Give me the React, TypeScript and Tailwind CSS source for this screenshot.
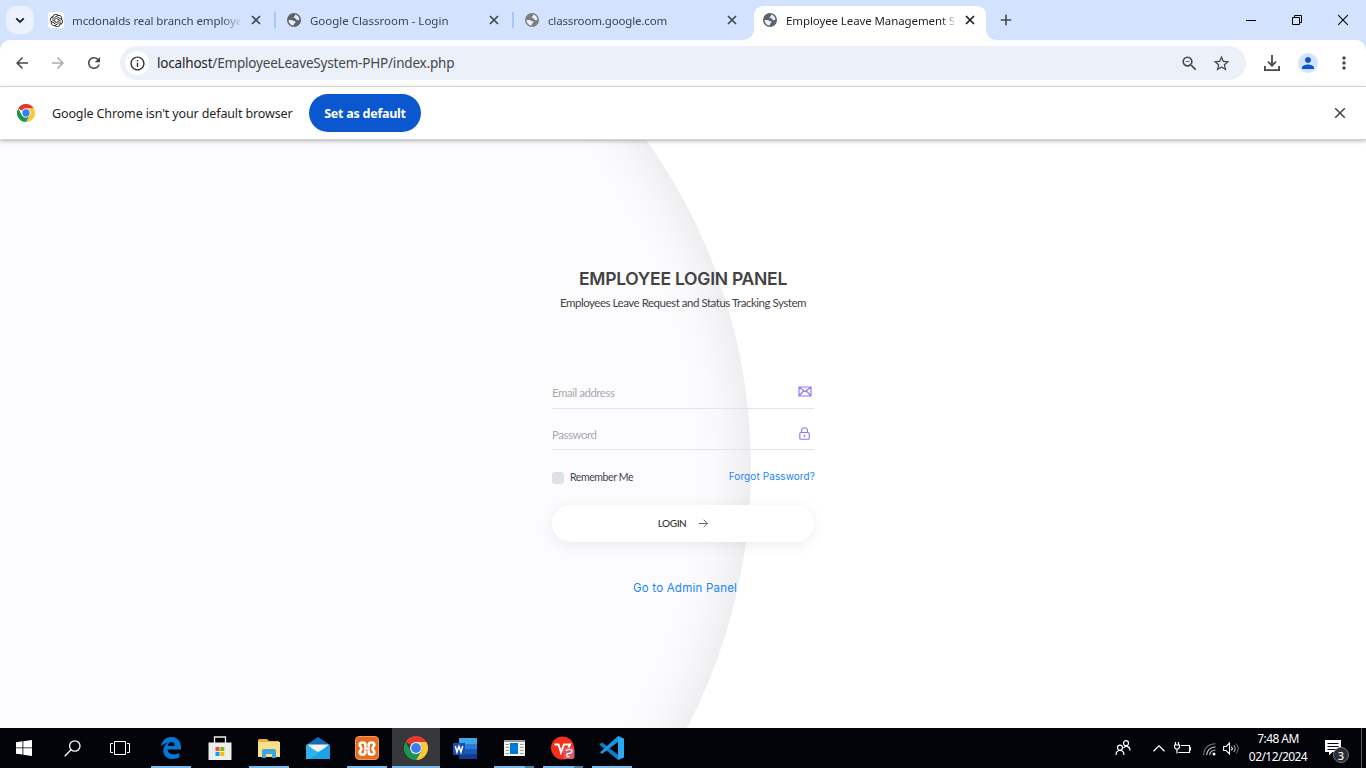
import React from "react";
import type { ReactNode } from "react";
import { SiOpenai } from "react-icons/si";
import {
  MdArrowBack,
  MdArrowForward,
  MdRefresh,
  MdInfoOutline,
  MdZoomOut,
  MdStarBorder,
  MdPerson,
  MdMoreVert,
} from "react-icons/md";

const ui = "font-['Noto_Sans','Open_Sans',sans-serif]";

function Cross({ size, color, width = 1.6 }: { size: number; color: string; width?: number }) {
  return (
    <svg width={size} height={size} viewBox="0 0 10 10" fill="none" stroke={color} strokeWidth={width}>
      <path d="M1 1l8 8M9 1L1 9" />
    </svg>
  );
}

function Globe({ color }: { color: string }) {
  return (
    <svg width="14" height="14" viewBox="0 0 14 14">
      <circle cx="7" cy="7" r="7" fill={color} />
      <path
        fill="#e6eefc"
        d="M8.3 1.6c2.3.5 4 2.6 4.1 5-.7.9-1.700 .9-2.500.5-.8-.5-.3-1.400-1.200-1.700-.8-.3-1.900 0-2.100-.8-.2-.9 1-.9 1.300-1.500.3-.6 0-1 .4-1.500zM1.600 7h3c1.300 0 1.500 1 2.400 1.200.9.200 1.600.1 1.600 1 0 1-1.400.8-1.600 1.600-.1.500 0 1-.3 1.600C3.800 12.200 1.500 10 1.600 7z"
      />
    </svg>
  );
}

function Chrome({ size }: { size: number }) {
  return (
    <svg width={size} height={size} viewBox="0 0 48 48">
      <path fill="#e33b2e" d="M3.200 12A24 24 0 0 1 44.800 12H24A12 12 0 0 0 13.600 18z" />
      <path fill="#fcc934" d="M44.800 12A24 24 0 0 1 24 48L34.400 30A12 12 0 0 0 34.400 18L24 12z" />
      <path fill="#1a9850" d="M24 48A24 24 0 0 1 3.200 12L13.600 30A12 12 0 0 0 24 36L34.400 30z" />
      <circle cx="24" cy="24" r="12" fill="#fff" />
      <circle cx="24" cy="24" r="9.800" fill="#3b7ded" />
    </svg>
  );
}

function Tab({ icon, title, active, line, spacing = "" }: { icon: ReactNode; title: string; active?: boolean; line?: boolean; spacing?: string }) {
  return (
    <div className="relative flex h-10 w-[238px] shrink-0 items-center">
      {active && (
        <svg className="absolute -left-2.5 top-1.5" width="256" height="34" viewBox="0 0 256 34">
          <path fill="#fff" d="M0 34Q11 33 11 22V10Q11 0 21 0H233Q243 0 243 10V22Q243 34 255 34z" />
        </svg>
      )}
      <div className="relative flex w-[33px] shrink-0 items-center pl-2.5">{icon}</div>
      <div
        className={`relative mt-px w-[168px] whitespace-nowrap text-[11.5px] leading-5 ${spacing} ${
          active ? "text-[#1f1f1f] [mask-image:linear-gradient(to_right,#000_155px,transparent_172px)]" : "text-[#3c4250] [mask-image:linear-gradient(to_right,#000_150px,transparent_170px)]"
        }`}
      >
        {title}
      </div>
      <div className="relative flex w-8 justify-center">
        <Cross size={10} color={active ? "#1f1f1f" : "#41464f"} width={1.7} />
      </div>
      {line && <div className="ml-0.5 h-4 w-0.5 shrink-0 bg-[#a8c7fa]" />}
    </div>
  );
}

function TabStrip() {
  return (
    <div className="flex h-10 shrink-0 items-center bg-[#d3e3fd]">
      <div className="ml-1.5 mr-[5px] flex size-7 items-center justify-center rounded-[10px] bg-[#ebf1fd]">
        <svg width="10" height="7" viewBox="0 0 10 7" fill="none" stroke="#1f1f1f" strokeWidth="1.800">
          <path d="M1.200 1.300L5 5l3.800-3.700" />
        </svg>
      </div>
      <Tab
        title="mcdonalds real branch employe"
        spacing="tracking-[-0.1px]"
        line
        icon={
          <span className="-ml-px flex size-4 items-center justify-center rounded-[3px] bg-white">
            <SiOpenai size={13} color="#222" />
          </span>
        }
      />
      <Tab title="Google Classroom - Login" line icon={<Globe color="#5f6368" />} />
      <Tab title="classroom.google.com" spacing="tracking-[-0.15px]" icon={<Globe color="#7d7d7f" />} />
      <Tab title="Employee Leave Management S" spacing="tracking-[-0.1px]" active icon={<Globe color="#5f6368" />} />
      <svg className="ml-[9px]" width="12" height="12" viewBox="0 0 12 12" stroke="#474747" strokeWidth="1.600">
        <path d="M6 .8v10.400M.8 6h10.400" />
      </svg>
      <div className="ml-auto flex items-center">
        <div className="flex w-[46px] justify-center"><div className="h-px w-2.5 bg-black" /></div>
        <div className="flex w-[46px] justify-center">
          <svg width="10" height="10" viewBox="0 0 10 10" fill="none" stroke="#000">
            <path d="M.5 2.500h7v7h-7zM2.500 2.500v-2h7v7h-2" />
          </svg>
        </div>
        <div className="flex w-[46px] justify-center"><Cross size={12} color="#000" width={0.9} /></div>
      </div>
    </div>
  );
}

function Toolbar() {
  return (
    <div className="bg-[#d3e3fd]">
      <div className="flex h-[47px] items-center rounded-t-[10px] border-b border-[#dfe1e2] bg-white text-[#474747]">
        <MdArrowBack size={18} className="ml-[13px]" />
        <MdArrowForward size={18} className="ml-[18px] text-[#acacac]" />
        <MdRefresh size={18} className="ml-[18px]" />
        <div className="ml-[17px] flex h-[34px] w-[1126px] items-center rounded-full bg-[#ecf0f9]">
          <div className="ml-[5px] flex size-6 items-center justify-center rounded-full bg-white">
            <MdInfoOutline size={17} color="#333" />
          </div>
          <div className="ml-2 whitespace-nowrap text-[13.5px] leading-5 tracking-[-0.19px] text-[#474747]">
            <span className="text-[#1f1f1f]">localhost</span>/EmployeeLeaveSystem-PHP/index.php
          </div>
          <MdZoomOut size={19} className="ml-auto" />
          <MdStarBorder size={19} className="ml-[13px] mr-[15px]" />
        </div>
        <svg className="ml-[18px]" width="16" height="16" viewBox="0 0 16 16" fill="none" stroke="#474747" strokeWidth="1.800">
          <path d="M8 0v10.500M4 6.700l4 4 4-4M.9 11v4.100h14.200V11" />
        </svg>
        <div className="ml-[18px] flex size-5 items-center justify-center rounded-full bg-[#d3e3fd]">
          <MdPerson size={18} color="#0b57d0" />
        </div>
        <MdMoreVert size={20} className="ml-4" />
      </div>
    </div>
  );
}

function InfoBar() {
  return (
    <div className="relative z-10 flex h-[53px] shrink-0 items-center border-b border-[#d4d5d7] bg-white shadow-[0_1px_4px_rgba(0,0,0,0.3)]">
      <div className="ml-[17px]"><Chrome size={18} /></div>
      <div className="ml-[17px] mt-0.5 w-[257px] whitespace-nowrap text-[12.5px] tracking-[-0.13px] text-[#1f1f1f]">
        Google Chrome isn't your default browser
      </div>
      <button className="flex h-[38px] w-28 items-center justify-center whitespace-nowrap rounded-full bg-[#0b57d0] pt-0.5 text-[12.5px] font-bold tracking-[-0.25px] text-white">
        Set as default
      </button>
      <div className="ml-auto mr-5"><Cross size={12} color="#474747" width={1.300} /></div>
    </div>
  );
}

function Field({ label, icon, className }: { label: string; icon: ReactNode; className: string }) {
  return (
    <div className={`flex w-[262px] items-center justify-between border-b border-[#e4e4e6] text-[11.5px] tracking-[-0.48px] text-[#aaa] ${className}`}>
      <span className="pt-0.5">{label}</span>
      {icon}
    </div>
  );
}

function LoginPage() {
  return (
    <main className="relative flex flex-1 flex-col items-center overflow-hidden bg-white font-['Lato',sans-serif]">
      <div className="absolute -left-[375px] -top-[236px] size-[1126px] rounded-full bg-[#fcfcff] shadow-[inset_0_0_60px_rgba(0,0,0,0.11)]" />
      <h1 className="relative mt-[125px] whitespace-nowrap font-['Inter',sans-serif] text-[17.5px] font-semibold leading-7 tracking-[-0.25px] text-[#424242]">
        EMPLOYEE LOGIN PANEL
      </h1>
      <p className="relative whitespace-nowrap text-[11.5px] leading-5 tracking-[-0.47px] text-[#444]">
        Employees Leave Request and Status Tracking System
      </p>
      <form className="relative mt-[63px] w-[262px]">
        <Field
          className="h-[33px]"
          label="Email address"
          icon={
            <svg className="mb-px mr-0.5" width="14" height="11" viewBox="0 0 14 11" fill="none" stroke="#9277ff" strokeWidth="1.200">
              <path d="M1 1h12v9H1zM1 1l6 4.800L13 1M1 10l4.500-5M13 10L8.500 5" />
            </svg>
          }
        />
        <Field
          className="h-[41px] pt-2.5"
          label="Password"
          icon={
            <svg className="mb-0.5 mr-1" width="11" height="13" viewBox="0 0 11 13" fill="none" stroke="#9277ff" strokeWidth="1.100">
              <rect x=".8" y="5.500" width="9.400" height="6.800" rx="1" />
              <path d="M2.500 5.500V3.700a3 3 0 0 1 6 0v1.800M5.500 8v2M4.700 8.200h1.600" />
            </svg>
          }
        />
        <div className="mt-[17px] flex h-5 items-center">
          <span className="mt-px size-3 rounded-[3px] bg-[#dee2e6]" />
          <span className="ml-1.5 mt-0.5 text-[10.5px] tracking-[-0.4px] text-[#444]">Remember Me</span>
          <a className="-mr-px mb-px ml-auto whitespace-nowrap font-['Inter',sans-serif] text-[10px] tracking-[0.1px] text-[#1a82ff]">Forgot Password?</a>
        </div>
        <button className="mt-[18px] flex h-[37px] w-full items-center justify-center rounded-full bg-white text-[10px] font-medium tracking-[-0.4px] text-[#333] shadow-[0_3px_16px_rgba(0,0,0,0.07)]">
          LOGIN
          <svg className="ml-[13px]" width="9" height="9" viewBox="0 0 9 9" fill="none" stroke="#555" strokeWidth=".9">
            <path d="M0 4.500h8.300M4.700 .8l3.700 3.700-3.700 3.700" />
          </svg>
        </button>
      </form>
      <a className="relative ml-1 mt-[37px] whitespace-nowrap font-['Inter',sans-serif] text-[11.5px] leading-[18px] tracking-[0.22px] text-[#1a82ff]">Go to Admin Panel</a>
    </main>
  );
}

function TaskItem({ children, open, active, split }: { children: ReactNode; open?: boolean; active?: boolean; split?: boolean }) {
  return (
    <div className={`flex h-10 w-12 shrink-0 flex-col items-center ${active ? "bg-[#37383b]" : ""}`}>
      <div className="flex h-[38px] items-center pt-0.5">{children}</div>
      {open && (
        <div className={`flex h-0.5 bg-[#76b9ed] ${active ? "w-12" : "w-10"}`}>
          {split && <div className="ml-auto h-0.5 w-[9px] bg-[#4f7ea4]" />}
        </div>
      )}
    </div>
  );
}

function Taskbar() {
  return (
    <footer className="flex h-10 shrink-0 bg-[#010308] text-white">
      <TaskItem>
        <svg width="16" height="16" viewBox="0 0 16 16" fill="#fff">
          <path d="M0 2.200L6.500 1.300V7.500H0zM7.300 1.200L16 0v7.500H7.300zM0 8.300h6.500v6.300L0 13.700zM7.300 8.300H16V16l-8.700-1.300z" />
        </svg>
      </TaskItem>
      <TaskItem>
        <svg width="17" height="17" viewBox="0 0 17 17" fill="none" stroke="#fff" strokeWidth="1.300">
          <circle cx="10.800" cy="6" r="5.200" />
          <path d="M7 9.800L.7 16.300" />
        </svg>
      </TaskItem>
      <TaskItem>
        <svg width="20" height="14" viewBox="0 0 20 14" fill="none" stroke="#fff">
          <path d="M4.500 .5h11v13h-11zM3 2.500H.5v9H3M17 2.500h2.500v9H17" />
        </svg>
      </TaskItem>
      <div className="flex gap-px pl-[3px]">
        <TaskItem open>
          <svg width="20" height="22" viewBox="0 0 20 22" fill="#0078d7">
            <path d="M0 9.600C.8 3.500 4.800 0 10.200 0 16.500 0 20 4.700 20 10v2.500H6.600c.2 3.500 3 4.900 6 4.900 2.200 0 4-.6 5.800-1.600v4.500C16.600 21.400 14.300 22 11.700 22 6.300 22 2.300 18.800 2.300 13.400c0-3.400 1.900-6.200 4.700-7.700C4 6 1.700 7.300 0 9.600zM6.700 9h7c0-2.500-1-4-3.200-4C8.300 5 7.100 6.800 6.700 9z" />
          </svg>
        </TaskItem>
        <TaskItem>
          <svg width="24" height="24" viewBox="0 0 24 24">
            <path fill="none" stroke="#eee" strokeWidth="1.300" d="M6.500 8V1h11v7" />
            <path fill="#eee" d="M.5 6.500h23V24H.5z" />
            <path fill="#f25022" d="M7.500 11h4v4h-4z" /><path fill="#7fba00" d="M12.300 11h4v4h-4z" />
            <path fill="#00a4ef" d="M7.500 16h4v4h-4z" /><path fill="#ffb900" d="M12.300 16h4v4h-4z" />
          </svg>
        </TaskItem>
        <TaskItem open>
          <svg width="22" height="19" viewBox="0 0 22 19">
            <path fill="#e8b13c" d="M1 0h8l2 2h10v4H0V1z" />
            <path fill="#fbe08c" d="M0 3h22v15H0z" />
            <path fill="#3aa7df" d="M4 19v-7q0-2 2-2h10q2 0 2 2v7h-4v-4H8v4z" />
          </svg>
        </TaskItem>
        <TaskItem>
          <svg width="24" height="22" viewBox="0 0 24 22">
            <path fill="#0f6cb8" d="M0 8L12 0l12 8v4H0z" />
            <path fill="#f2f2f2" d="M1 7.500h22L12 17z" />
            <path fill="#29b5ef" d="M0 8l12 7 12-7v14H0z" />
            <path fill="#1490df" d="M24 8v14H4z" opacity=".5" />
          </svg>
        </TaskItem>
        <TaskItem open>
          <div className="flex size-6 items-center justify-center rounded-sm border border-[#f5965a] bg-[#e86c1e]">
            <svg width="18" height="15" viewBox="0 0 18 16" preserveAspectRatio="none" fill="none" stroke="#fff" strokeWidth="2.700" strokeLinejoin="round" strokeLinecap="round">
              <path d="M7 8h4M7.300 5V4a2.800 2.500 0 0 0-5.600 0C1.700 5.800 3.400 6 3.400 8S1.700 10.200 1.700 12a2.800 2.500 0 0 0 5.600 0v-1M10.700 5V4a2.800 2.500 0 0 1 5.600 0C16.300 5.800 14.600 6 14.600 8s1.700 2.200 1.700 4a2.800 2.500 0 0 1-5.600 0v-1" />
            </svg>
          </div>
        </TaskItem>
        <TaskItem open active><Chrome size={24} /></TaskItem>
        <TaskItem>
          <svg width="24" height="21" viewBox="0 0 24 21">
            <path fill="#41a5ee" d="M6 0h18v6H6z" /><path fill="#2b7cd3" d="M6 6h18v5H6z" />
            <path fill="#185abd" d="M6 11h18v5H6z" /><path fill="#103f91" d="M6 16h18v5H6z" />
            <path fill="#1750ad" d="M0 5h12v12H0z" />
            <path fill="none" stroke="#fff" strokeWidth="1.500" d="M2.300 8l1.600 6L6 8.500 8 14l1.700-6" />
          </svg>
        </TaskItem>
        <TaskItem open split>
          <svg width="21" height="16" viewBox="0 0 21 16">
            <path fill="#f3f3f3" d="M0 0h21v16H0z" /><path fill="#9a9a9a" d="M0 0h21v2H0z" />
            <path stroke="#999" d="M1.500 4.500H5M1.500 7.500H5M1.500 10.500H5M1.500 13.500H5M16 4.500h3.500M16 7.500h3.500M16 10.500h3.500M16 13.500h3.500" />
            <path fill="#0078d7" d="M6 3h8v11H6z" />
          </svg>
        </TaskItem>
        <TaskItem open split>
          <svg width="24" height="24" viewBox="0 0 24 24">
            <circle cx="11.500" cy="12" r="11.500" fill="#f3301c" />
            <path fill="none" stroke="#fff" strokeWidth="2" d="M3.500 8.500h4l2.500 8 3-8h6l-1.800 4" />
            <rect x="12.500" y="11.500" width="11" height="11.500" rx="2" fill="#dc5a67" />
            <path fill="none" stroke="#fff" strokeWidth="1.200" d="M15.300 15q0-1.500 2.700-1.500 3 0 3 1.800 0 2-3 2t-2 3.200q1.500 .8 2.500-.5" />
          </svg>
        </TaskItem>
        <TaskItem open>
          <svg width="24" height="24" viewBox="0 0 24 24">
            <path fill="#0e7dc5" d="M0 8l2-1.800L18 18.800V24L0 9.300z" />
            <path fill="#1c94dd" d="M0 16.200L18 0v6L2 18z" />
            <path fill="#29a9f2" d="M18 0l6 2.500v19L18 24z" />
          </svg>
        </TaskItem>
      </div>
      <div className="ml-auto flex items-center">
        <svg width="16" height="16" viewBox="0 0 16 16" fill="none" stroke="#fff" strokeWidth="1.200">
          <circle cx="11" cy="3.200" r="2.500" /><circle cx="5" cy="7.700" r="2.500" />
          <path d="M1 15c0-6 8-6 8 0M8.500 8C11 5 15 6.500 15 10.500" />
        </svg>
        <svg className="ml-[22px]" width="12" height="7" viewBox="0 0 12 7" fill="none" stroke="#fff" strokeWidth="1.300"><path d="M.5 6.200L6 .9l5.500 5.300" /></svg>
        <svg className="ml-[9px]" width="17" height="13" viewBox="0 0 17 13" fill="none" stroke="#fff" strokeWidth="1.200">
          <path d="M7 3.500h8.500v7H4.500M15.500 5.500h1v3M1.500 0v3M4.500 0v3M.5 3h5v2.500l-1.500 1.500h-2L.5 5.500zM3 7v4.500" />
        </svg>
        <svg className="ml-3 mt-0.5" width="13" height="13" viewBox="0 0 13 13" fill="none" strokeWidth="1.100">
          <path stroke="#777" d="M.7 12C.7 5.500 5.500 .8 12.500 .8" /><path stroke="#ccc" d="M3.700 12c0-4.500 3.800-8 8.800-8M6.700 12c0-2.800 2.500-5 5.800-5" />
          <circle cx="11" cy="11" r="1.500" fill="#fff" />
        </svg>
        <svg className="ml-[7px]" width="17" height="13" viewBox="0 0 17 13" fill="none" stroke="#fff" strokeWidth="1.100">
          <path d="M.6 4.500h2.500L6.500 1v11L3.100 8.500H.6z" /><path d="M8.500 4.500q1.500 2 0 4" />
          <path stroke="#aaa" d="M10.700 3q3 3.500 0 7" /><path stroke="#666" d="M13 1.500q4.500 5 0 10" />
        </svg>
        <div className="ml-[5px] flex w-[66px] flex-col items-center whitespace-nowrap text-[12px] leading-[18px] tracking-[-0.55px]">
          <span>7:48 AM</span>
          <span>02/12/2024</span>
        </div>
        <div className="relative ml-[14px] h-[26px] w-6">
          <svg className="mt-[5px]" width="16" height="16" viewBox="0 0 16 16">
            <path fill="#fff" d="M0 0h16v12H7.500L4 15.500V12H0z" /><path stroke="#010308" d="M2.500 3.500h11M2.500 6.500h11M2.500 9.500h8" />
          </svg>
          <span className="absolute left-2 top-3 flex size-4 items-center justify-center rounded-full border border-[#777] bg-[#2b2d31] text-[11px] font-medium leading-none">3</span>
        </div>
        <div className="ml-3 h-10 w-px bg-[#55585c]" />
        <div className="w-1" />
      </div>
    </footer>
  );
}

export default function App() {
  return (
    <div className={`flex h-[768px] w-[1366px] flex-col overflow-hidden bg-white ${ui}`}>
      <TabStrip />
      <Toolbar />
      <InfoBar />
      <LoginPage />
      <Taskbar />
    </div>
  );
}
